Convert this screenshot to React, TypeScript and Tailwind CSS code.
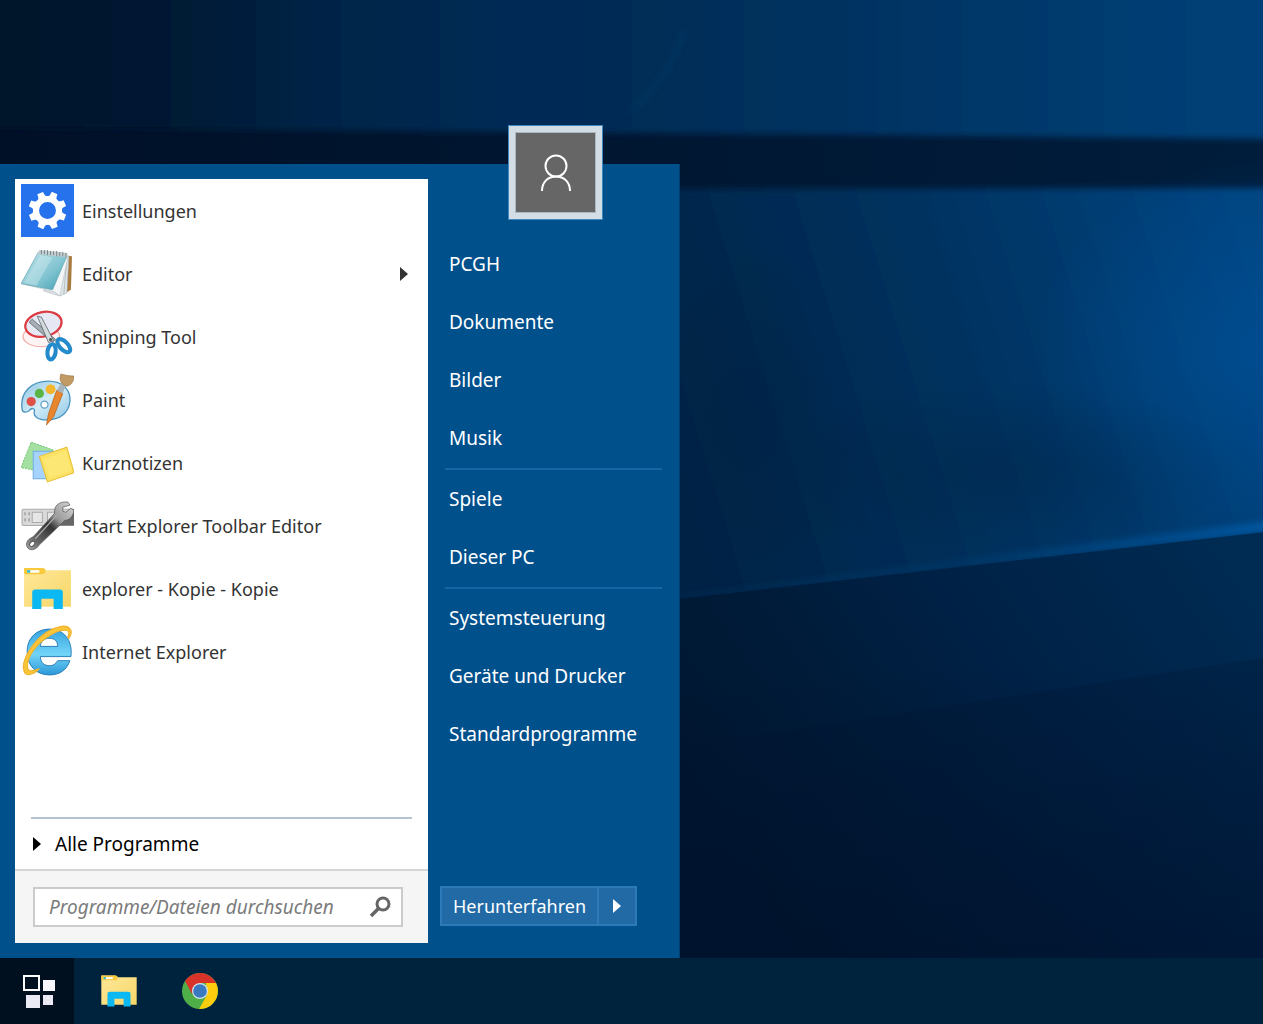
import { useState } from "react";
import type { ReactNode } from "react";

const Wallpaper = () => (
    <svg
        className="absolute inset-0 size-full"
        viewBox="0 0 1263 958"
        preserveAspectRatio="none"
        aria-hidden="true">
        <defs>
            <linearGradient id="top" x1="0" x2="1" y1="0" y2="0">
                <stop offset="0" stopColor="#00122a" />
                <stop offset=".13" stopColor="#001831" />
                <stop offset=".25" stopColor="#002345" />
                <stop offset=".4" stopColor="#002b54" />
                <stop offset=".52" stopColor="#002d57" />
                <stop offset=".7" stopColor="#003464" />
                <stop offset="1" stopColor="#00427a" />
            </linearGradient>
            <linearGradient id="bar" x1="0" x2="1" y1="0" y2="0">
                <stop offset="0" stopColor="#001027" />
                <stop offset="1" stopColor="#001d3c" />
            </linearGradient>
            <linearGradient id="pane" gradientUnits="userSpaceOnUse" x1="680" x2="1263" y1="480" y2="300">
                <stop offset="0" stopColor="#002345" />
                <stop offset=".4" stopColor="#002f5a" />
                <stop offset=".75" stopColor="#003b70" />
                <stop offset="1" stopColor="#004480" />
            </linearGradient>
            <linearGradient id="floor" gradientUnits="userSpaceOnUse" x1="1263" x2="760" y1="560" y2="900">
                <stop offset="0" stopColor="#002c54" />
                <stop offset=".45" stopColor="#002146" />
                <stop offset=".75" stopColor="#001b38" />
                <stop offset="1" stopColor="#001630" />
            </linearGradient>
            <linearGradient id="dusk" x1="0" x2="0" y1="0" y2="1">
                <stop offset="0" stopColor="#00102a" stopOpacity="0" />
                <stop offset="1" stopColor="#00102a" stopOpacity=".5" />
            </linearGradient>
            <linearGradient id="edge" x1="0" x2="1" y1="0" y2="0">
                <stop offset="0" stopColor="#06284f" />
                <stop offset=".5" stopColor="#003767" />
                <stop offset="1" stopColor="#0058a2" />
            </linearGradient>
            <radialGradient id="glow">
                <stop offset="0" stopColor="#00529a" stopOpacity=".6" />
                <stop offset="1" stopColor="#00529a" stopOpacity="0" />
            </radialGradient>
            <radialGradient id="dim">
                <stop offset="0" stopColor="#00203f" stopOpacity=".35" />
                <stop offset="1" stopColor="#00203f" stopOpacity="0" />
            </radialGradient>
            <filter id="soft" x="-20%" y="-20%" width="140%" height="140%">
                <feGaussianBlur stdDeviation="3" />
            </filter>
        </defs>
        <rect width="1263" height="958" fill="url(#bar)" />
        <path d="M-20-20H1283V139L640 133L-20 128Z" fill="url(#top)" filter="url(#soft)" />
        <path d="M630 112Q668 80 684 30" fill="none" stroke="#0a4272" strokeWidth="3" opacity=".5" filter="url(#soft)" />
        <path d="M640 189L1283 188V532L660 602Z" fill="url(#pane)" filter="url(#soft)" />
        <ellipse cx="1263" cy="350" rx="230" ry="190" fill="url(#glow)" />
        <ellipse cx="745" cy="420" rx="130" ry="180" fill="url(#dim)" />
        <ellipse cx="1000" cy="470" rx="240" ry="90" fill="url(#dim)" />
        <path d="M670 602L1283 530V519L670 597Z" fill="url(#edge)" filter="url(#soft)" />
        <path d="M660 601L1283 530V980H660Z" fill="url(#floor)" />
        <path d="M660 750L1283 655V980H660Z" fill="#00142e" opacity=".25" />
        <path d="M660 660H1283V980H660Z" fill="url(#dusk)" />
    </svg>
);

const SettingsIcon = () => (
    <svg viewBox="0 0 52 52" className="size-full">
        <rect width="52" height="52" fill="#2672ec" />
        <g fill="#fff" transform="translate(26 26)">
            {[22, 67, 112, 157, 202, 247, 292, 337].map((angle) => (
                <path key={angle} d="M-4.800-12L-3.400-15L-3-18.500H3L3.400-15L4.800-12Z" transform={`rotate(${angle})`} />
            ))}
        </g>
        <circle cx="26" cy="26" r="11.300" fill="none" stroke="#fff" strokeWidth="6" />
    </svg>
);

const NotepadIcon = () => (
    <svg viewBox="0 0 52 52" className="size-full">
        <defs>
            <linearGradient id="pad" x1="0" x2="1" y1="0" y2="1">
                <stop offset="0" stopColor="#c3e6ec" />
                <stop offset=".6" stopColor="#7fc3d0" />
                <stop offset="1" stopColor="#3e9cb0" />
            </linearGradient>
        </defs>
        <path d="M41 8L50 9L49 42L42 46Z" fill="#a87a3c" />
        <path d="M42 8L47 9L45 45L38 48L22 43Z" fill="#dfe5e8" stroke="#a9b4b8" strokeWidth=".6" />
        <path d="M45 12L42 46" stroke="#a3adb1" strokeWidth=".7" />
        <path d="M1 36L33 44L38 48L46 10Z" fill="#f4f6f7" stroke="#b7c0c3" strokeWidth=".6" />
        <path d="M17 5L45 9L31 42L0 36Z" fill="url(#pad)" stroke="#5c9eab" strokeWidth=".6" />
        <path d="M19 8L31 10L15 38L3 35Z" fill="#e0f4f6" opacity=".35" />
        <path d="M18 3L46 6L45 10L16 7Z" fill="#c4ced0" />
        <path d="M20 3V7M23 3V7M26 3V8M29 4V8M32 4V8M35 4V9M38 5V9M41 5V9M44 6V10" stroke="#7d898c" strokeWidth="1" />
    </svg>
);

const SnippingIcon = () => (
    <svg viewBox="0 0 52 52" className="size-full">
        <ellipse cx="20" cy="26" rx="18" ry="10" fill="#fdf3f3" stroke="#f0b0b0" strokeWidth="1.300" />
        <ellipse cx="22" cy="14" rx="18" ry="12" transform="rotate(-12 22 14)" fill="#e6e8f3" stroke="#dc3b42" strokeWidth="2.200" />
        <path d="M8 12L31 32L34 29L11 9Z" fill="#a6afb3" stroke="#59666b" strokeWidth=".8" />
        <path d="M16 6L27 32L32 30L20 7Z" fill="#d6dbdd" stroke="#59666b" strokeWidth=".8" />
        <circle cx="29" cy="29" r="1.500" fill="#4d5659" />
        <ellipse cx="30" cy="41" rx="4" ry="7.500" transform="rotate(8 30 41)" fill="#fff" stroke="#238bcb" strokeWidth="4" />
        <ellipse cx="42" cy="35" rx="4" ry="8" transform="rotate(-44 42 35)" fill="#fff" stroke="#238bcb" strokeWidth="4" />
    </svg>
);

const PaintIcon = () => (
    <svg viewBox="0 0 52 52" className="size-full">
        <defs>
            <linearGradient id="palette" x1="0" x2="1" y1="0" y2="1">
                <stop offset="0" stopColor="#8fc5e3" />
                <stop offset=".5" stopColor="#d3ecf7" />
                <stop offset="1" stopColor="#8cc6e6" />
            </linearGradient>
        </defs>
        <path
            d="M1 35C-1 19 10 8 27 8C41 8 49 17 48 28C47 39 38 46 25 46C17 46 12 43 13 38C14 34 10 34 8 37C5 39 1 39 1 35Z"
            fill="url(#palette)"
            stroke="#4b94bf"
            strokeWidth="1.300"
        />
        <circle cx="10" cy="28" r="4.500" fill="#df5148" />
        <circle cx="18" cy="20" r="4.500" fill="#59b445" />
        <circle cx="29" cy="16" r="4.800" fill="#f5b52c" />
        <circle cx="23" cy="31" r="3.500" fill="#fff" stroke="#5ba0c6" strokeWidth="1.200" />
        <path d="M41 20L35 17L27 40L25 51L32 43Z" fill="#e8862d" stroke="#b45f19" strokeWidth=".7" />
        <path d="M35 17L40 9L44 12L41 20Z" fill="#a9b4ba" />
        <path d="M40 10C37 6 39 3 39 1C43 2 47 3 52 3C52 8 49 13 44 13Z" fill="#c19a64" stroke="#94713d" strokeWidth=".6" />
    </svg>
);

const NotesIcon = () => (
    <svg viewBox="0 0 52 52" className="size-full">
        <path d="M10 6L32 14L22 35L0 31Z" fill="#a5e0a3" stroke="#79c877" strokeDasharray="2 1" />
        <path d="M12 15H32V42H12Z" fill="#a6d3fb" stroke="#6fadea" />
        <path d="M18 20L45 11L52 36L26 45Z" fill="#fbe265" stroke="#e6be32" />
        <path d="M22 23L44 15L49 34L28 41Z" fill="#ffed8c" opacity=".4" />
    </svg>
);

const WrenchIcon = () => (
    <svg viewBox="0 0 52 52" className="size-full">
        <defs>
            <linearGradient id="steel" x1="1" x2="0" y1="0" y2="1">
                <stop offset="0" stopColor="#dadada" />
                <stop offset=".35" stopColor="#999" />
                <stop offset=".5" stopColor="#343434" />
                <stop offset=".8" stopColor="#666" />
                <stop offset="1" stopColor="#aaa" />
            </linearGradient>
        </defs>
        <rect x="1" y="10" width="51" height="16" rx="1.500" fill="#d9d9d9" stroke="#aaa" />
        <path d="M33 26L50 10H52V26Z" fill="#666" />
        <path d="M4 13V16M4 19V22M8 13V16M8 19V22" stroke="#999" strokeWidth="1.300" />
        <path d="M11 13H21V23H11ZM26 13H36V23H26Z" fill="#e6e6e6" stroke="#aaa" />
        <path
            d="M33 14C32 7 37 2 46 3L48 6L41 8L41 12L44 13L49 9L52 11C51 18 47 21 43 21L18 45C14 51 8 51 6 47C4 43 7 39 12 37Z"
            fill="url(#steel)"
            stroke="#555"
            strokeWidth=".7"
        />
        <path d="M35 16L14 39" stroke="#aaa" strokeWidth="1.200" />
        <ellipse cx="11" cy="44" rx="3" ry="2" transform="rotate(-45 11 44)" fill="#fff" stroke="#555" />
    </svg>
);

const FolderIcon = () => (
    <svg viewBox="0 0 52 52" className="size-full">
        <defs>
            <linearGradient id="folder" x1="0" x2="1" y1="0" y2="1">
                <stop offset="0" stopColor="#ffe79a" />
                <stop offset="1" stopColor="#f6d768" />
            </linearGradient>
        </defs>
        <path d="M3 6H22L25 8H49V44H3Z" fill="url(#folder)" />
        <path d="M3 6H20Q24 6 24 9T20 12H3Z" fill="#f8c93c" />
        <rect x="6" y="8" width="12" height="2.500" fill="#fff" />
        <rect x="6" y="8" width="3" height="2.500" fill="#26b7c9" />
        <path d="M11 46V30Q11 27 14 27H38Q41 27 41 30V46H32V36H20V46Z" fill="#0cb8f2" />
    </svg>
);

const InternetIcon = () => (
    <svg viewBox="0 0 52 52" className="size-full">
        <defs>
            <linearGradient id="ie" x1="0" x2="0" y1="0" y2="1">
                <stop offset="0" stopColor="#37a4df" />
                <stop offset=".55" stopColor="#72d4f8" />
                <stop offset="1" stopColor="#2b98d8" />
            </linearGradient>
        </defs>
        <path
            d="M49 31H19C19 37 23 40 28 40C32 40 34 38 36 35H48C45 44 38 49 28 49C15 49 6 40 6 26C6 13 15 4 28 4C42 4 51 15 49 31ZM19 21H36C36 16 33 13 28 13C23 13 19 16 19 21Z"
            fill="url(#ie)"
            stroke="#2077b4"
            strokeWidth=".9"
        />
        <path
            d="M46 12C48 7 47 5 43 5C32 5 15 18 9 30C5 38 5 45 10 45C13 45 15 44 18 43C12 49 4 51 3 45C0 36 10 18 24 8C34 1 45-1 48 4C50 6 49 10 47 13Z"
            fill="#fac63a"
            stroke="#f0b52e"
            strokeWidth="1.300"
        />
    </svg>
);

const ChromeIcon = () => (
    <svg viewBox="0 0 36 36" className="size-9">
        <circle cx="18" cy="18" r="18" fill="#4fae48" />
        <path d="M3 8A18 18 0 0 1 34 10H18L10 21Z" fill="#d93228" />
        <path d="M34 10A18 18 0 0 1 17 36L25 22L24 10Z" fill="#fccc0d" />
        <circle cx="18" cy="18" r="8" fill="#d5e2ea" />
        <circle cx="18" cy="18" r="6.800" fill="#3879bf" />
    </svg>
);

const StartIcon = () => (
    <svg viewBox="0 0 32 34" className="h-[34px] w-8">
        <rect x="1" y="2" width="15" height="14" fill="none" stroke="#fff" strokeWidth="2" />
        <path d="M20 6H32V17H20Z" fill="#f8f8fc" />
        <path d="M3 21H17V34H3ZM20 21H30V31H20Z" fill="#e9eaf3" />
    </svg>
);

const Arrow = () => (
    <svg viewBox="0 0 8 14" className="h-3.5 w-2 shrink-0" fill="currentColor" aria-hidden="true">
        <path d="M0 0L8 7L0 14Z" />
    </svg>
);

type Program = { title: string; icon: ReactNode; submenu?: boolean };

const programs: Program[] = [
    { title: "Einstellungen", icon: <SettingsIcon /> },
    { title: "Editor", icon: <NotepadIcon />, submenu: true },
    { title: "Snipping Tool", icon: <SnippingIcon /> },
    { title: "Paint", icon: <PaintIcon /> },
    { title: "Kurznotizen", icon: <NotesIcon /> },
    { title: "Start Explorer Toolbar Editor", icon: <WrenchIcon /> },
    { title: "explorer - Kopie - Kopie", icon: <FolderIcon /> },
    { title: "Internet Explorer", icon: <InternetIcon /> },
];

const places = [
    ["PCGH", "Dokumente", "Bilder", "Musik"],
    ["Spiele", "Dieser PC"],
    ["Systemsteuerung", "Geräte und Drucker", "Standardprogramme"],
];

function ProgramPanel() {
    const [query, setQuery] = useState("");

    return (
        <div className="w-[413px] flex flex-col bg-white text-[#333]">
            <ul className="text-lg">
                {programs.map((program) => (
                    <li key={program.title}>
                        <button className="w-full h-[63px] flex items-center gap-2 pl-1.5 pr-5 text-left">
                            <span className="size-[53px] shrink-0">{program.icon}</span>
                            <span className="flex-1">{program.title}</span>
                            {program.submenu && <Arrow />}
                        </button>
                    </li>
                ))}
            </ul>
            <div className="mt-auto mx-4 border-t-2 border-[#b4c3d2]">
                <button className="h-[50px] w-full flex items-center gap-3.5 pl-0.5 text-black">
                    <Arrow />
                    Alle Programme
                </button>
            </div>
            <div className="border-t-2 border-[#d5d5d5] bg-[#f5f5f5] pl-[18px] pr-[25px] py-4">
                <label className="h-10 flex items-center border-2 border-[#cbcbcb] bg-white pl-3.5 pr-2.5">
                    <input
                        type="text"
                        value={query}
                        onChange={(e) => setQuery(e.target.value)}
                        aria-label="Programme/Dateien durchsuchen"
                        placeholder="Programme/Dateien durchsuchen"
                        className="flex-1 min-w-0 italic outline-none placeholder:text-[#7b7b7b]"
                    />
                    <svg viewBox="0 0 22 22" className="size-[22px]" fill="none" stroke="#666">
                        <circle cx="14" cy="8" r="6" strokeWidth="3" />
                        <path d="M10 12L2 20" strokeWidth="3.500" />
                    </svg>
                </label>
            </div>
        </div>
    );
}

function PlacesPanel() {
    return (
        <div className="flex-1 flex flex-col pl-3 pr-[17px] pb-[17px] text-white">
            <div className="size-[95px] -mt-[54px] mb-[15px] ml-[68px] shrink-0 border border-[#3f87bf] bg-[#d3dde6] p-1.5">
                <div className="size-full border border-[#adb7c0] bg-[#666] flex items-center justify-center">
                    <svg viewBox="0 0 32 38" className="h-[38px] w-8" fill="none" stroke="#fff" strokeWidth="2">
                        <circle cx="16" cy="12" r="10.500" />
                        <path d="M2 37C2 28 8 22.500 16 22.500S30 28 30 37" />
                    </svg>
                </div>
            </div>
            <nav className="ml-[5px]">
                {places.map((group, i) => (
                    <div key={i}>
                        {i > 0 && <hr className="mt-px border-0 h-0.5 bg-[#1765a5]" />}
                        {group.map((place) => (
                            <a key={place} href="#" className="h-[58px] flex items-center px-1">
                                {place}
                            </a>
                        ))}
                    </div>
                ))}
            </nav>
            <div className="mt-auto h-10 flex self-start border-2 border-[#2e7ab8] bg-[#226aa6] text-lg">
                <button className="px-[11px]">Herunterfahren</button>
                <button aria-label="Weitere Optionen" className="w-[38px] flex items-center justify-center border-l-2 border-[#2e7ab8]">
                    <Arrow />
                </button>
            </div>
        </div>
    );
}

export default function App() {
    return (
        <div className="h-screen min-h-[900px] flex flex-col bg-[#000f24] font-['Noto_Sans',sans-serif] text-[19px] leading-6">
            <main className="relative flex-1 flex items-end">
                <Wallpaper />
                <section className="relative w-[680px] h-[794px] flex p-[15px] pr-0 bg-[#00508c] border-r border-[#003e70]">
                    <ProgramPanel />
                    <PlacesPanel />
                </section>
            </main>
            <footer className="h-[66px] shrink-0 flex bg-[#00233d]">
                <button aria-label="Start" className="w-[74px] flex items-center justify-center bg-[#00101f] pl-1">
                    <StartIcon />
                </button>
                <button aria-label="Explorer" className="w-[90px] flex items-center justify-center">
                    <span className="size-10">
                        <FolderIcon />
                    </span>
                </button>
                <button aria-label="Chrome" className="w-[72px] flex items-center justify-center">
                    <ChromeIcon />
                </button>
            </footer>
        </div>
    );
}
